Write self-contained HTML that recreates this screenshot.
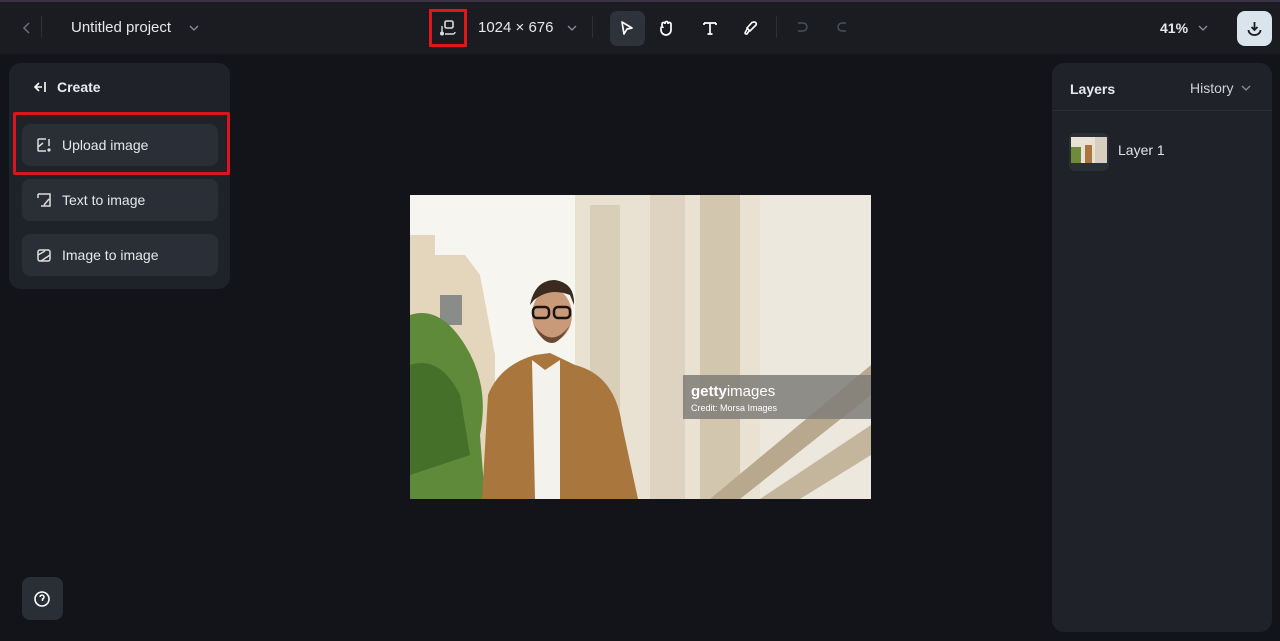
<!DOCTYPE html>
<html><head><meta charset="utf-8"><style>
*{box-sizing:border-box;margin:0;padding:0}
body{width:1280px;height:641px;background:#121419;font-family:"Liberation Sans",sans-serif;color:#e8eaee;position:relative;overflow:hidden}
.top{position:absolute;left:0;top:0;width:1280px;height:54px;background:#1a1c22;border-top:2px solid #3a3446}
.abs{position:absolute}
.panel{position:absolute;background:#1f2229;border-radius:12px}
.btn{position:absolute;left:22px;width:196px;height:42px;background:#2a2e36;border-radius:8px;font-size:14px;color:#e6e8ec;display:flex;align-items:center;padding-left:40px}
.btn svg{position:absolute;left:14px;top:13px}
</style></head><body>
<div class="top">
 <svg class="abs" style="left:20px;top:18px" width="14" height="16"><path d="M9 3 L4 8 L9 13" stroke="#6b6f78" stroke-width="1.5" fill="none"/></svg>
 <div class="abs" style="left:41px;top:14px;width:1px;height:22px;background:#2c2f36"></div>
 <div class="abs" style="left:71px;top:17px;font-size:15px;color:#e6e8ec">Untitled project</div>
 <svg class="abs" style="left:188px;top:20px" width="12" height="12"><path d="M2 4 L6 8 L10 4" stroke="#8a8e96" stroke-width="1.3" fill="none"/></svg>
 <div class="abs" style="left:429px;top:7px;width:38px;height:38px;border:3px solid #e0161b"></div>
 <svg class="abs" style="left:439px;top:17px" width="18" height="18"><rect x="6" y="2" width="8" height="7" rx="1.5" stroke="#ddd" stroke-width="1.6" fill="none"/><path d="M3 7 V13 M6 15 H14 a2 2 0 0 0 2-2" stroke="#ddd" stroke-width="1.4" fill="none"/><circle cx="3" cy="14.5" r="2" fill="#ddd"/></svg>
 <div class="abs" style="left:478px;top:17px;font-size:15px;color:#e6e8ec">1024 × 676</div>
 <svg class="abs" style="left:566px;top:20px" width="12" height="12"><path d="M2 4 L6 8 L10 4" stroke="#8a8e96" stroke-width="1.3" fill="none"/></svg>
 <div class="abs" style="left:592px;top:14px;width:1px;height:22px;background:#2c2f36"></div>
 <div class="abs" style="left:610px;top:9px;width:35px;height:35px;background:#2e323a;border-radius:7px"></div>
 <svg class="abs" style="left:618px;top:17px" width="18" height="18"><path d="M4 3 L14 9 L9 10 L6 15 Z" stroke="#fff" stroke-width="1.7" fill="none" stroke-linejoin="round"/></svg>
 <svg class="abs" style="left:657px;top:17px" width="18" height="18"><path d="M5 9 V5 a1.5 1.5 0 0 1 3 0 V4 a1.5 1.5 0 0 1 3 0 V5 a1.5 1.5 0 0 1 3 0 V11 a5 5 0 0 1-10 0 V9 a1 1 0 0 1 2 0" stroke="#fff" stroke-width="1.7" fill="none"/></svg>
 <svg class="abs" style="left:701px;top:17px" width="18" height="18"><path d="M3 4 H15 M3 4 V6 M15 4 V6 M9 4 V15 M6.5 15 H11.5" stroke="#fff" stroke-width="1.7" fill="none"/></svg>
 <svg class="abs" style="left:741px;top:17px" width="18" height="18"><path d="M13 3 a2 2 0 0 1 2 3 L9 12 L6 9 L11 3.5 Z M6 10 L4 14 a1.5 1.5 0 0 0 2 1 L8 12" stroke="#fff" stroke-width="1.6" fill="none"/></svg>
 <div class="abs" style="left:776px;top:14px;width:1px;height:22px;background:#2c2f36"></div>
 <svg class="abs" style="left:794px;top:18px" width="16" height="16"><path d="M4 3 H9 a4 4 0 0 1 0 8 H4" stroke="#4a4e56" stroke-width="1.5" fill="none"/></svg>
 <svg class="abs" style="left:834px;top:18px" width="16" height="16"><path d="M12 3 H8 a4 4 0 0 0 0 8 H12" stroke="#4a4e56" stroke-width="1.5" fill="none"/></svg>
 <div class="abs" style="left:1160px;top:18px;font-size:14px;font-weight:bold;color:#e6e8ec">41%</div>
 <svg class="abs" style="left:1197px;top:20px" width="12" height="12"><path d="M2 4 L6 8 L10 4" stroke="#8a8e96" stroke-width="1.3" fill="none"/></svg>
 <div class="abs" style="left:1237px;top:9px;width:35px;height:35px;background:#d9e4ec;border-radius:8px"></div>
 <svg class="abs" style="left:1245px;top:17px" width="19" height="19"><path d="M9.5 3 V11 M6.5 8 L9.5 11 L12.5 8 M3.5 11 a6 5 0 0 0 12 0" stroke="#1a1c22" stroke-width="1.8" fill="none"/></svg>
</div>

<div class="panel" style="left:9px;top:63px;width:221px;height:226px">
 <svg class="abs" style="left:22px;top:17px" width="18" height="14"><path d="M8 3 L4 7 L8 11 M4 7 H11 M14 2 V12" stroke="#fff" stroke-width="1.6" fill="none"/></svg>
 <div class="abs" style="left:48px;top:16px;font-size:14px;font-weight:bold">Create</div>
</div>
<div class="btn" style="top:124px">
 <svg width="16" height="16"><path d="M10 2 H3 a1 1 0 0 0-1 1 V13 a1 1 0 0 0 1 1 H10 M13 2 V9 M2 10 L7 6" stroke="#ddd" stroke-width="1.5" fill="none"/><circle cx="13" cy="13" r="1.6" fill="#ddd"/></svg>Upload image</div>
<div class="abs" style="left:13px;top:112px;width:217px;height:63px;border:3px solid #d8161c;border-radius:2px"></div>
<div class="btn" style="top:179px">
 <svg width="16" height="16"><path d="M2 2 H14 V14 H5 M2 2 V6 M8 13 L13 7" stroke="#ddd" stroke-width="1.5" fill="none"/></svg>Text to image</div>
<div class="btn" style="top:234px">
 <svg width="16" height="16"><rect x="2" y="3" width="12" height="11" rx="2" stroke="#ddd" stroke-width="1.5" fill="none"/><path d="M2 8 L9 4 M5 14 L14 8" stroke="#ddd" stroke-width="1.5"/></svg>Image to image</div>

<div class="abs" style="left:22px;top:577px;width:41px;height:43px;background:#2a2e36;border-radius:8px"></div>
<svg class="abs" style="left:33px;top:590px" width="18" height="18"><circle cx="9" cy="9" r="7" stroke="#fff" stroke-width="1.6" fill="none"/><path d="M7 7 a2 2 0 1 1 2.5 2 V11" stroke="#fff" stroke-width="1.5" fill="none"/></svg>

<div class="panel" style="left:1052px;top:63px;width:220px;height:569px">
 <div class="abs" style="left:18px;top:18px;font-size:14px;font-weight:bold">Layers</div>
 <div class="abs" style="left:138px;top:17px;font-size:14px;color:#cfd2d8">History</div>
 <svg class="abs" style="left:188px;top:19px" width="12" height="12"><path d="M2 4 L6 8 L10 4" stroke="#8a8e96" stroke-width="1.3" fill="none"/></svg>
 <div class="abs" style="left:0;top:47px;width:220px;height:1px;background:#2b2e35"></div>
 <div class="abs" style="left:17px;top:70px;width:40px;height:38px;background:#2a2e36;border-radius:6px"></div>
 <svg class="abs" style="left:19px;top:74px" width="36" height="26"><rect width="36" height="26" fill="#e8e2d4"/><rect x="0" y="10" width="10" height="16" fill="#6f8a3e"/><rect x="14" y="8" width="7" height="18" fill="#a9763d"/><rect x="24" y="0" width="12" height="26" fill="#d7cfbe"/></svg>
 <div class="abs" style="left:66px;top:79px;font-size:14px;color:#e0e2e6">Layer 1</div>
</div>

<svg class="abs" style="left:410px;top:195px" width="461" height="304" viewBox="0 0 461 304">
 <rect width="461" height="304" fill="#f3f1ea"/>
 <rect x="0" y="0" width="175" height="304" fill="#f6f5f0"/>
 <path d="M0 40 L25 40 L25 60 L55 60 L70 80 L85 160 L85 304 L0 304 Z" fill="#e4d6bd"/>
 <rect x="30" y="100" width="22" height="30" fill="#8a8c88"/>
 <path d="M0 120 Q30 110 55 150 Q80 190 70 240 L75 304 L0 304 Z" fill="#5f8a3a"/>
 <path d="M0 170 Q30 160 50 200 L60 260 L0 280 Z" fill="#44702a"/>
 <path d="M165 0 L461 0 L461 304 L165 304 Z" fill="#e9e2d2"/>
 <rect x="180" y="10" width="30" height="294" fill="#d9ceb8"/>
 <rect x="240" y="0" width="35" height="304" fill="#ddd3c0"/>
 <rect x="290" y="0" width="40" height="304" fill="#d2c6af"/>
 <rect x="350" y="0" width="111" height="304" fill="#ece8de"/>
 <path d="M300 304 L461 170 L461 200 L330 304 Z" fill="#b8a98e"/>
 <path d="M350 304 L461 230 L461 260 L390 304 Z" fill="#c4b69c"/>
 <rect x="273" y="180" width="188" height="44" fill="#7f7d78" opacity="0.85"/>
 <text x="281" y="201" font-family="Liberation Sans" font-size="15" font-weight="bold" fill="#fff">getty<tspan font-weight="normal">images</tspan></text>
 <text x="281" y="216" font-family="Liberation Sans" font-size="9" fill="#fff">Credit: Morsa Images</text>
 <path d="M72 304 L78 200 Q90 170 125 160 L140 158 L165 170 Q205 180 212 230 L228 304 Z" fill="#a9763d"/>
 <path d="M122 165 L135 175 L150 165 L150 304 L125 304 Z" fill="#f4f2ec"/>
 <ellipse cx="142" cy="120" rx="20" ry="26" fill="#c99a7a"/>
 <path d="M120 110 Q125 85 145 85 Q165 88 164 110 L160 100 Q140 92 124 105 Z" fill="#3a2a20"/>
 <rect x="123" y="112" width="16" height="11" rx="4" fill="none" stroke="#1a1410" stroke-width="2.5"/>
 <rect x="144" y="112" width="16" height="11" rx="4" fill="none" stroke="#1a1410" stroke-width="2.5"/>
 <path d="M124 130 Q142 155 160 130 Q150 148 142 148 Q132 148 124 130 Z" fill="#6b4a35"/>
</svg>
</body></html>
